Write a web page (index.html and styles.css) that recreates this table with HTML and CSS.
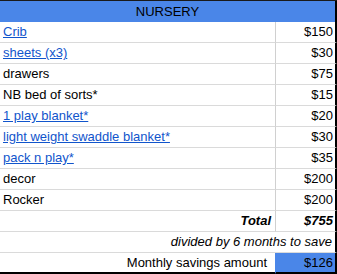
FILE: index.html
```html
<!DOCTYPE html>
<html>
<head>
<meta charset="utf-8">
<link rel="stylesheet" href="styles.css">
</head>
<body>
<table class="sheet">
  <colgroup><col class="c1"><col class="c2"></colgroup>
  <tr class="head"><td colspan="2">NURSERY</td></tr>
  <tr><td><a href="#">Crib</a></td><td class="num">$150</td></tr>
  <tr><td><a href="#">sheets (x3) </a></td><td class="num">$30</td></tr>
  <tr><td>drawers</td><td class="num">$75</td></tr>
  <tr><td>NB bed of sorts*</td><td class="num">$15</td></tr>
  <tr><td><a href="#">1 play blanket* </a></td><td class="num">$20</td></tr>
  <tr><td><a href="#">light weight swaddle blanket*</a></td><td class="num">$30</td></tr>
  <tr><td><a href="#">pack n play* </a></td><td class="num">$35</td></tr>
  <tr><td>decor</td><td class="num">$200</td></tr>
  <tr><td>Rocker</td><td class="num">$200</td></tr>
  <tr class="total"><td class="lbl">Total</td><td class="num">$755</td></tr>
  <tr class="divided"><td colspan="2">divided by 6 months to save</td></tr>
  <tr class="monthly"><td class="lbl">Monthly savings amount</td><td class="num">$126</td></tr>
</table>
</body>
</html>
```

FILE: styles.css
```css
html, body {
  margin: 0;
  padding: 0;
  background: #ffffff;
}

.sheet {
  border-collapse: separate;
  border-spacing: 0;
  table-layout: fixed;
  width: 337px;
  font-family: "Liberation Sans", Arial, sans-serif;
  font-size: 13px;
  color: #000000;
  border-top: 1px solid #1a1a1a;
}

.c1 { width: 275px; }
.c2 { width: 62px; }

.sheet td {
  height: 20px;
  line-height: 20px;
  padding: 0 0 0 3px;
  border-bottom: 1px solid #dadada;
  white-space: nowrap;
  overflow: visible;
  vertical-align: middle;
  box-sizing: content-box;
}

.sheet td.num {
  text-align: right;
  padding: 0 2px 0 0;
  border-left: 1px solid #d0d0d0;
  border-right: 2px solid #000000;
}

.sheet a {
  color: #1155cc;
  text-decoration: underline;
}

.head td {
  background: #4a86e8;
  text-align: center;
  height: 21px;
  line-height: 21px;
  border-bottom: none;
  border-right: 2px solid #000000;
  padding: 0;
}

.total td {
  font-weight: bold;
  font-style: italic;
}

.total td.lbl {
  text-align: right;
  padding-right: 4px;
}

.divided td {
  text-align: right;
  font-style: italic;
  border-right: 2px solid #000000;
  padding-right: 3px;
}

.monthly td {
  height: 19px;
  line-height: 19px;
  border-bottom: 2px solid #000000;
}

.monthly td.lbl {
  text-align: right;
  padding-right: 8px;
}

.monthly td.num {
  background: #4a86e8;
  border-left: 1px solid #4a86e8;
}
```
